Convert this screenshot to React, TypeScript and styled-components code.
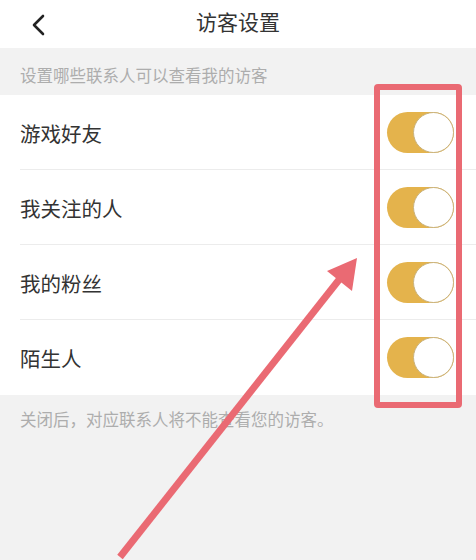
import styled, { createGlobalStyle } from "styled-components"

const GlobalStyle = createGlobalStyle`
  html, body {
    margin: 0;
    padding: 0;
    background: #f2f2f2;
  }
  body {
    font-family: "Noto Sans CJK SC", "Noto Sans", sans-serif;
  }
`

const Page = styled.div`
  position: relative;
  width: 476px;
  height: 560px;
  overflow: hidden;
  background: #f2f2f2;
`

const Header = styled.div`
  height: 48px;
  background: #fff;
  display: flex;
  align-items: center;
  justify-content: center;
  position: relative;
`

const Back = styled.svg`
  position: absolute;
  left: 30px;
  top: 14px;
`

const Title = styled.div`
  font-size: 21px;
  color: #333;
  margin-top: -6px;
`

const Hint = styled.div`
  height: 47px;
  box-sizing: border-box;
  padding: 15px 20px 0;
  font-size: 16.5px;
  color: #adadad;
`

const List = styled.div`
  background: #fff;
`

const Row = styled.div<{ $last?: boolean }>`
  height: 75px;
  display: flex;
  align-items: center;
  justify-content: space-between;
  padding: 0 22px 0 20px;
  position: relative;
  &::after {
    content: "";
    display: ${(p) => (p.$last ? "none" : "block")};
    position: absolute;
    left: 20px;
    right: 0;
    bottom: 0;
    height: 1px;
    background: #ececec;
  }
`

const Label = styled.div`
  font-size: 20.5px;
  color: #333;
`

const Toggle = styled.div`
  width: 67px;
  height: 41px;
  border-radius: 21px;
  background: #e4b34c;
  position: relative;
`

const Knob = styled.div`
  position: absolute;
  right: 0;
  top: 0;
  width: 39px;
  height: 39px;
  border-radius: 50%;
  background: #fff;
  border: 1px solid #c9b27c;
`

const Footer = styled.div`
  padding: 12px 20px;
  font-size: 16.5px;
  color: #adadad;
`

const Frame = styled.div`
  position: absolute;
  left: 374px;
  top: 84px;
  width: 88px;
  height: 324px;
  box-sizing: border-box;
  border: 6px solid #ea6a73;
  border-radius: 4px;
`

const Arrow = styled.svg`
  position: absolute;
  left: 0;
  top: 0;
`

const items = ["游戏好友", "我关注的人", "我的粉丝", "陌生人"]

const App = () => {
  return (
    <Page>
      <GlobalStyle />
      <Header>
        <Back width="16" height="22" viewBox="0 0 16 22">
          <path d="M13 2 L4 11 L13 20" fill="none" stroke="#222" strokeWidth="2.6" strokeLinecap="round" strokeLinejoin="round" />
        </Back>
        <Title>访客设置</Title>
      </Header>
      <Hint>设置哪些联系人可以查看我的访客</Hint>
      <List>
        {items.map((t, i) => (
          <Row key={t} $last={i === items.length - 1}>
            <Label>{t}</Label>
            <Toggle>
              <Knob />
            </Toggle>
          </Row>
        ))}
      </List>
      <Footer>关闭后，对应联系人将不能查看您的访客。</Footer>
      <Frame />
      <Arrow width="476" height="560" viewBox="0 0 476 560">
        <line x1="120" y1="557" x2="342" y2="276" stroke="#ea6a73" strokeWidth="7" />
        <polygon points="357,258 352,291 327,271" fill="#ea6a73" />
      </Arrow>
    </Page>
  )
}

export default App
